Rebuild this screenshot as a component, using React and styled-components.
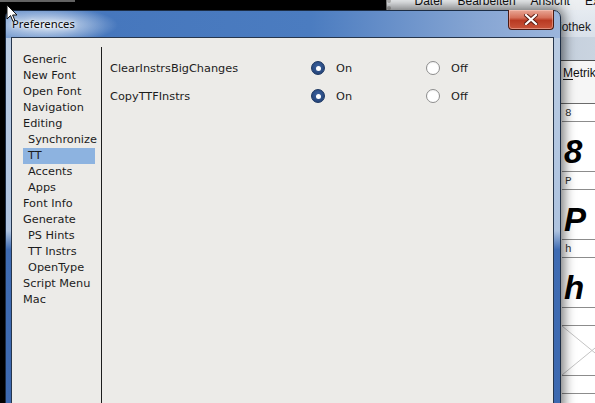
import React from 'react';
import styled, { createGlobalStyle } from 'styled-components';

const GlobalStyle = createGlobalStyle`
  html, body {
    margin: 0;
    padding: 0;
    background: #000;
    overflow: hidden;
  }
`;

const uiFont = `"DejaVu Sans", "Noto Sans", sans-serif`;

const Desktop = styled.div`
  position: relative;
  width: 595px;
  height: 403px;
  overflow: hidden;
  background: #000;
`;

const DesktopStrip = styled.div`
  position: absolute;
  left: 0;
  top: 0;
  width: 75px;
  height: 2px;
  background: #6b6b6b;
`;

/* background application window (FontForge) */
const BackApp = styled.div`
  position: absolute;
  left: 386px;
  top: -22px;
  width: 240px;
  height: 440px;
  display: flex;
  flex-direction: column;
  background: #fff;
  border-left: 1px solid #8a8a8a;
  font-family: "Liberation Sans", Arial, sans-serif;
`;

const MenuBar = styled.div`
  height: 32px;
  display: flex;
  align-items: flex-end;
  padding: 0 0 2px 16px;
  box-sizing: border-box;
  background: linear-gradient(#f5f6f7, #e9ecef);
  border-left: 4px dotted #b8b8b8;
`;

const MenuItem = styled.span`
  padding: 0 7.5px;
  font-size: 12px;
  line-height: 14px;
  color: #111;
`;

const AppToolbar = styled.div`
  height: 27px;
  display: flex;
  align-items: flex-end;
  padding: 0 0 3px 152px;
  box-sizing: border-box;
  background: linear-gradient(#e6ebf1, #d9e1ea);
  font-size: 12px;
  color: #1a1a1a;
`;

const AppHeader = styled.div`
  height: 24px;
  box-sizing: border-box;
  background: linear-gradient(90deg, #a9b9cc, #cfd8e3);
  border-bottom: 1px solid #4d4d4d;
`;

const MetrikRow = styled.div`
  height: 43px;
  box-sizing: border-box;
  padding: 5px 0 0 176px;
  background: #f6f6f6;
  border-bottom: 1px solid #6b6b6b;
  font-size: 12px;
  color: #111;

  & u {
    text-decoration-thickness: 1px;
    text-underline-offset: 2px;
  }
`;

const GlyphGrid = styled.div`
  display: flex;
  flex-direction: column;
  padding-left: 175px;
`;

const GlyphLabel = styled.div`
  height: 18px;
  box-sizing: border-box;
  border-bottom: 1px solid #8c8c8c;
  padding: 2px 0 0 3px;
  font-family: "Liberation Mono", "DejaVu Sans Mono", monospace;
  font-size: 11px;
  line-height: 15px;
  color: #333;
`;

const GlyphCell = styled.div`
  height: 50px;
  box-sizing: border-box;
  border-bottom: 1px solid #8c8c8c;
  padding: 13px 0 0 2px;
  font-family: "Liberation Sans", Arial, sans-serif;
  font-weight: bold;
  font-style: italic;
  font-size: 33px;
  line-height: 1;
  color: #000;
`;

const EmptyGlyph = styled(GlyphCell)`
  padding: 0;
`;

/* preferences dialog */
const Dialog = styled.div`
  position: absolute;
  left: 5px;
  top: 10px;
  width: 556px;
  height: 400px;
  box-sizing: border-box;
  display: flex;
  flex-direction: column;
  border: 1px solid #1c2d45;
  border-radius: 7px 7px 0 0;
  padding: 0 6px 0 5px;
  background:
    radial-gradient(ellipse 70px 18px at 42px 14px, rgba(230, 238, 248, 0.95), rgba(230, 238, 248, 0) 100%),
    linear-gradient(90deg, #6e95cc 0%, #4677bd 18%, #4b7cc0 55%, #86a5d3 85%, #9bb5dc 100%);
  box-shadow: 0 0 12px 3px rgba(0, 0, 0, 0.55);
`;

const SideFrame = styled.div`
  position: absolute;
  inset: 27px 0 0 0;
  z-index: 0;
  background: linear-gradient(#b9cbe2 0%, #aec3df 52%, #3f6cb3 57%, #3d69b0 100%);
`;

const TitleBar = styled.div`
  position: relative;
  z-index: 1;
  height: 26px;
  display: flex;
  align-items: flex-start;
  padding-left: 1px;
`;

const Title = styled.span`
  font-family: "Noto Sans", "Open Sans", sans-serif;
  font-size: 11.3px;
  line-height: 26px;
  color: #0b0b0b;
  text-shadow: 0 0 6px #fff, 0 0 3px #fff;
`;

const CloseButton = styled.div`
  margin-left: auto;
  margin-top: -1px;
  width: 46px;
  height: 20px;
  box-sizing: border-box;
  display: flex;
  align-items: center;
  justify-content: center;
  border: 1px solid #4b1a12;
  border-top: none;
  border-radius: 0 0 4px 4px;
  background: linear-gradient(#e9a796 0%, #d5705a 40%, #b93a22 55%, #c9553b 100%);
  box-shadow: inset 0 0 0 1px rgba(255, 210, 200, 0.45);
`;

const Client = styled.div`
  position: relative;
  z-index: 1;
  flex: 1;
  display: flex;
  padding-top: 9px;
  border: 1px solid #26364d;
  border-bottom: none;
  background: #ecebe8;
  font-family: ${uiFont};
  font-size: 11.3px;
  color: #1c1c1c;
`;

const Sidebar = styled.div`
  width: 89px;
  box-sizing: border-box;
  padding: 5px 0 0 11px;
  display: flex;
  flex-direction: column;
`;

const NavItem = styled.div`
  width: 72px;
  height: 16px;
  box-sizing: border-box;
  line-height: 16px;
  padding-left: ${p => (p.$indent ? 5 : 0)}px;
  background: ${p => (p.$selected ? '#8db3e0' : 'transparent')};
  white-space: nowrap;
`;

const Pane = styled.div`
  flex: 1;
  border-left: 1px solid #1d1d1d;
  padding: 7px 0 0 8px;
`;

const OptionRow = styled.div`
  height: 28px;
  display: flex;
  align-items: center;
`;

const OptionName = styled.div`
  width: 201px;
`;

const RadioOption = styled.label`
  width: 115px;
  display: flex;
  align-items: center;
  gap: 11px;
`;

const RadioDot = styled.span`
  width: 14px;
  height: 14px;
  box-sizing: border-box;
  border-radius: 50%;
  display: flex;
  align-items: center;
  justify-content: center;
  border: 1px solid ${p => (p.$checked ? '#1a3561' : '#8e8e8e')};
  background: ${p =>
    p.$checked
      ? 'radial-gradient(circle at 50% 40%, #3d63a0, #1f3d70)'
      : 'radial-gradient(circle at 50% 60%, #ffffff 55%, #e4e4e4)'};

  &::after {
    content: '';
    display: ${p => (p.$checked ? 'block' : 'none')};
    width: 5px;
    height: 5px;
    border-radius: 50%;
    background: #fff;
  }
`;

const Cursor = styled.svg`
  position: absolute;
  left: 6px;
  top: 4px;
  z-index: 5;
`;

const navItems = [
  { label: 'Generic' },
  { label: 'New Font' },
  { label: 'Open Font' },
  { label: 'Navigation' },
  { label: 'Editing' },
  { label: 'Synchronize', indent: true },
  { label: 'TT', indent: true, selected: true },
  { label: 'Accents', indent: true },
  { label: 'Apps', indent: true },
  { label: 'Font Info' },
  { label: 'Generate' },
  { label: 'PS Hints', indent: true },
  { label: 'TT Instrs', indent: true },
  { label: 'OpenType', indent: true },
  { label: 'Script Menu' },
  { label: 'Mac' },
];

const options = [
  { name: 'ClearInstrsBigChanges', on: true },
  { name: 'CopyTTFInstrs', on: true },
];

const glyphs = ['8', 'P', 'h'];

const App = () => (
  <>
    <GlobalStyle />
    <Desktop>
      <DesktopStrip />
      <BackApp>
        <MenuBar>
          <MenuItem>Datei</MenuItem>
          <MenuItem>Bearbeiten</MenuItem>
          <MenuItem>Ansicht</MenuItem>
          <MenuItem>Extras</MenuItem>
        </MenuBar>
        <AppToolbar>Bibliothek</AppToolbar>
        <AppHeader />
        <MetrikRow>
          <u>M</u>etrik
        </MetrikRow>
        <GlyphGrid>
          {glyphs.map(g => (
            <React.Fragment key={g}>
              <GlyphLabel>{g}</GlyphLabel>
              <GlyphCell>{g}</GlyphCell>
            </React.Fragment>
          ))}
          <GlyphLabel />
          <EmptyGlyph>
            <svg width="60" height="49" viewBox="0 0 60 49">
              <line x1="0" y1="0" x2="60" y2="49" stroke="#c4c4c4" strokeWidth="1" />
              <line x1="0" y1="49" x2="60" y2="0" stroke="#c4c4c4" strokeWidth="1" />
            </svg>
          </EmptyGlyph>
          <GlyphLabel />
        </GlyphGrid>
      </BackApp>

      <Dialog>
        <SideFrame />
        <TitleBar>
          <Title>Preferences</Title>
          <CloseButton>
            <svg width="14" height="11" viewBox="0 0 14 11">
              <path d="M2 1 L12 10 M12 1 L2 10" stroke="#5a1a10" strokeWidth="4" strokeLinecap="square" />
              <path d="M2 1 L12 10 M12 1 L2 10" stroke="#fff" strokeWidth="2.2" strokeLinecap="square" />
            </svg>
          </CloseButton>
        </TitleBar>
        <Client>
          <Sidebar>
            {navItems.map(item => (
              <NavItem key={item.label} $indent={item.indent} $selected={item.selected}>
                {item.label}
              </NavItem>
            ))}
          </Sidebar>
          <Pane>
            {options.map(opt => (
              <OptionRow key={opt.name}>
                <OptionName>{opt.name}</OptionName>
                <RadioOption>
                  <RadioDot $checked={opt.on} />
                  On
                </RadioOption>
                <RadioOption>
                  <RadioDot $checked={!opt.on} />
                  Off
                </RadioOption>
              </OptionRow>
            ))}
          </Pane>
        </Client>
      </Dialog>

      <Cursor width="12" height="19" viewBox="0 0 12 19">
        <path d="M1 1 L1 15 L4.5 11.5 L7 17.5 L9 16.6 L6.6 11 L11 11 Z" fill="#fff" stroke="#111" strokeWidth="1" strokeLinejoin="round" />
      </Cursor>
    </Desktop>
  </>
);

export default App;
